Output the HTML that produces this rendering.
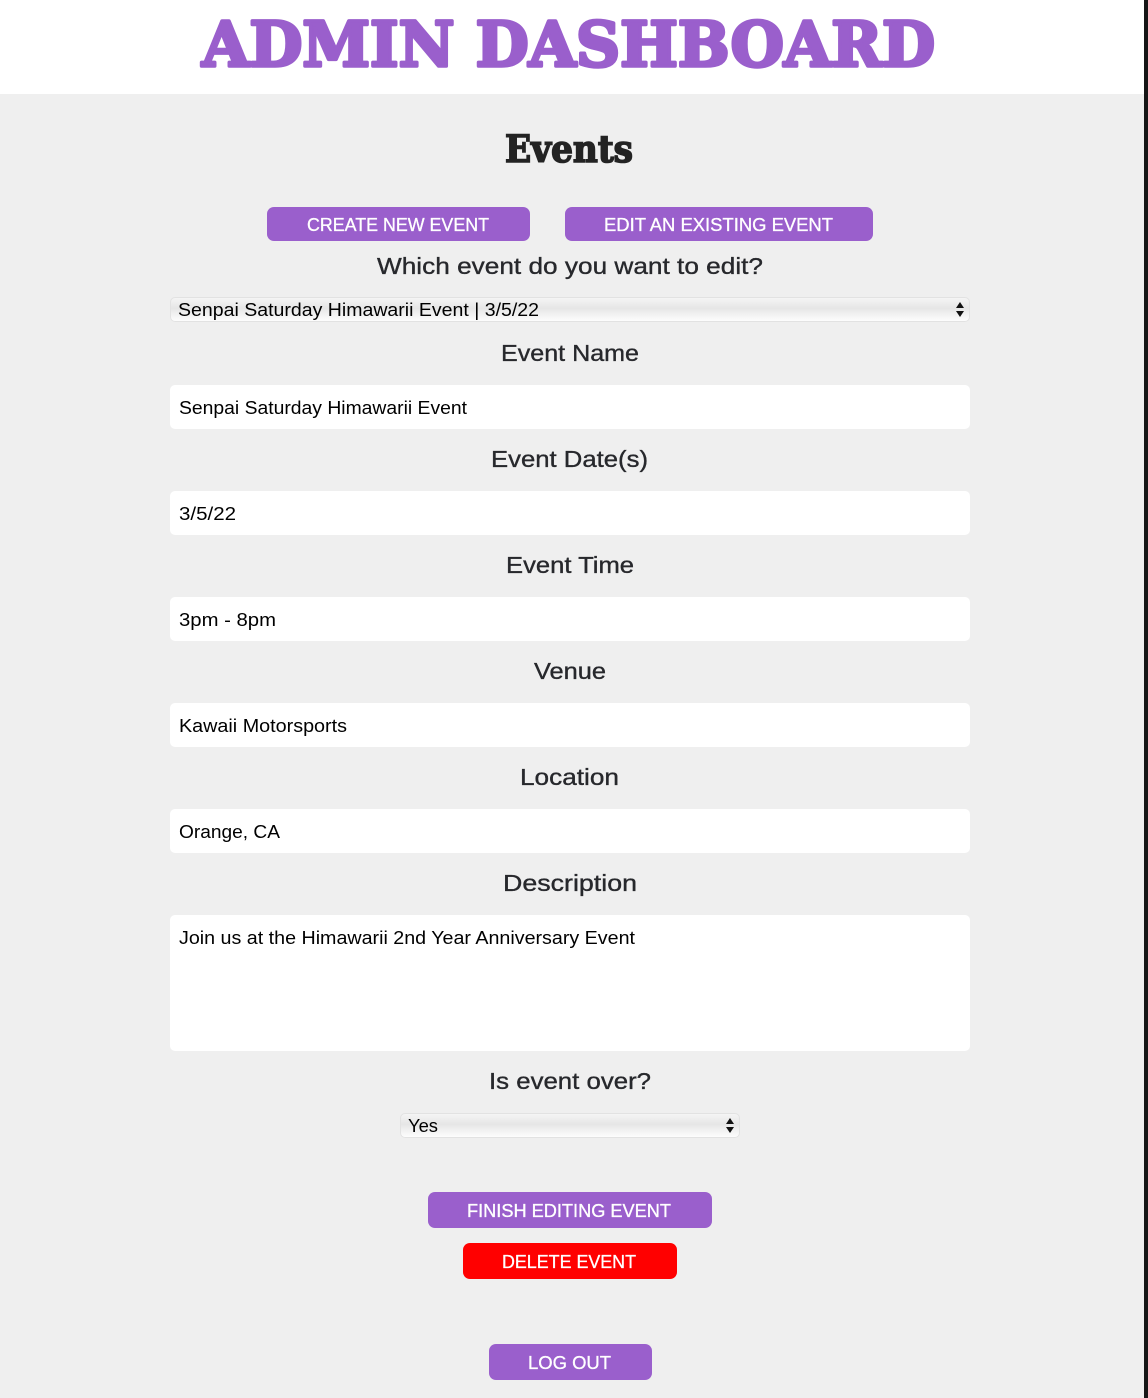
<!DOCTYPE html>
<html><head><meta charset="utf-8"><style>
html,body{margin:0;padding:0}
body{width:1148px;height:1398px;background:#efefef;position:relative;overflow:hidden;font-family:"Liberation Sans",sans-serif}
.abs{position:absolute}
.hdr{left:0;top:0;width:1144px;height:94px;background:#fff}
.bar{left:1144px;top:0;width:4px;height:1398px;background:#161616}
.inp{position:absolute;left:170px;width:800px;background:#fff;border-radius:5px}
.btn{position:absolute;background:#9a5fcc;border-radius:7px}
.sel{position:absolute;height:25px;border-radius:5px;background:linear-gradient(#f6f6f6,#e6e6e6 45%,#fff);box-shadow:0 0 0 1px #e2e2e2 inset}
</style></head><body>
<div class="abs hdr"></div>
<div class="abs bar"></div>
<div class="btn" style="left:267px;top:207px;width:263px;height:34px"></div>
<div class="btn" style="left:565px;top:207px;width:308px;height:34px"></div>
<div class="sel" style="left:170px;top:297px;width:800px"></div>
<div class="inp" style="top:385px;height:44px"></div>
<div class="inp" style="top:491px;height:44px"></div>
<div class="inp" style="top:597px;height:44px"></div>
<div class="inp" style="top:703px;height:44px"></div>
<div class="inp" style="top:809px;height:44px"></div>
<div class="inp" style="top:915px;height:136px"></div>
<div class="sel" style="left:400px;top:1113px;width:340px"></div>
<div class="btn" style="left:428px;top:1192px;width:284px;height:36px"></div>
<div class="btn" style="left:463px;top:1243px;width:214px;height:36px;background:#ff0000"></div>
<div class="btn" style="left:489px;top:1344px;width:163px;height:36px"></div>
<svg class="abs" style="left:0;top:0" width="1148" height="1398" xmlns="http://www.w3.org/2000/svg">
<g font-family="DejaVu Serif, Liberation Serif, serif" font-weight="bold">
<text x="202" y="66" font-size="62" fill="#9a5fcc" stroke="#9a5fcc" stroke-width="3.5" stroke-linejoin="round" textLength="733" lengthAdjust="spacingAndGlyphs">ADMIN DASHBOARD</text>
<text x="505" y="162" font-size="37" fill="#232323" stroke="#232323" stroke-width="1.6" textLength="128" lengthAdjust="spacingAndGlyphs">Events</text>
</g>
<g font-family="Liberation Sans, sans-serif" fill="#fff" stroke="#fff" stroke-width="0.3" font-size="18">
<text x="307" y="231" textLength="182" lengthAdjust="spacingAndGlyphs">CREATE NEW EVENT</text>
<text x="604" y="231" textLength="229" lengthAdjust="spacingAndGlyphs">EDIT AN EXISTING EVENT</text>
<text x="467" y="1217" textLength="204" lengthAdjust="spacingAndGlyphs">FINISH EDITING EVENT</text>
<text x="502" y="1268" textLength="134" lengthAdjust="spacingAndGlyphs">DELETE EVENT</text>
<text x="528" y="1369" textLength="83" lengthAdjust="spacingAndGlyphs">LOG OUT</text>
</g>
<g font-family="Liberation Sans, sans-serif" fill="#27282c" stroke="#27282c" stroke-width="0.35" font-size="23">
<text x="377" y="274" textLength="386" lengthAdjust="spacingAndGlyphs">Which event do you want to edit?</text>
<text x="501" y="361" textLength="138" lengthAdjust="spacingAndGlyphs">Event Name</text>
<text x="491" y="467" textLength="157" lengthAdjust="spacingAndGlyphs">Event Date(s)</text>
<text x="506" y="573" textLength="128" lengthAdjust="spacingAndGlyphs">Event Time</text>
<text x="534" y="679" textLength="72" lengthAdjust="spacingAndGlyphs">Venue</text>
<text x="520" y="785" textLength="99" lengthAdjust="spacingAndGlyphs">Location</text>
<text x="503" y="891" textLength="134" lengthAdjust="spacingAndGlyphs">Description</text>
<text x="489" y="1089" textLength="162" lengthAdjust="spacingAndGlyphs">Is event over?</text>
</g>
<g font-family="Liberation Sans, sans-serif" fill="#000" font-size="18">
<text x="178" y="316" textLength="361" lengthAdjust="spacingAndGlyphs">Senpai Saturday Himawarii Event | 3/5/22</text>
<text x="179" y="414" textLength="288" lengthAdjust="spacingAndGlyphs">Senpai Saturday Himawarii Event</text>
<text x="179" y="520" textLength="57" lengthAdjust="spacingAndGlyphs">3/5/22</text>
<text x="179" y="626" textLength="97" lengthAdjust="spacingAndGlyphs">3pm - 8pm</text>
<text x="179" y="732" textLength="168" lengthAdjust="spacingAndGlyphs">Kawaii Motorsports</text>
<text x="179" y="838" textLength="101" lengthAdjust="spacingAndGlyphs">Orange, CA</text>
<text x="179" y="944" textLength="456" lengthAdjust="spacingAndGlyphs">Join us at the Himawarii 2nd Year Anniversary Event</text>
<text x="408" y="1132" textLength="30" lengthAdjust="spacingAndGlyphs">Yes</text>
</g>
<g fill="#111">
<path d="M956 308 L960 302 L964 308 Z M956 311 L964 311 L960 317 Z"/>
<path d="M726 1124 L730 1118 L734 1124 Z M726 1127 L734 1127 L730 1133 Z"/>
</g>
</svg>
</body></html>
